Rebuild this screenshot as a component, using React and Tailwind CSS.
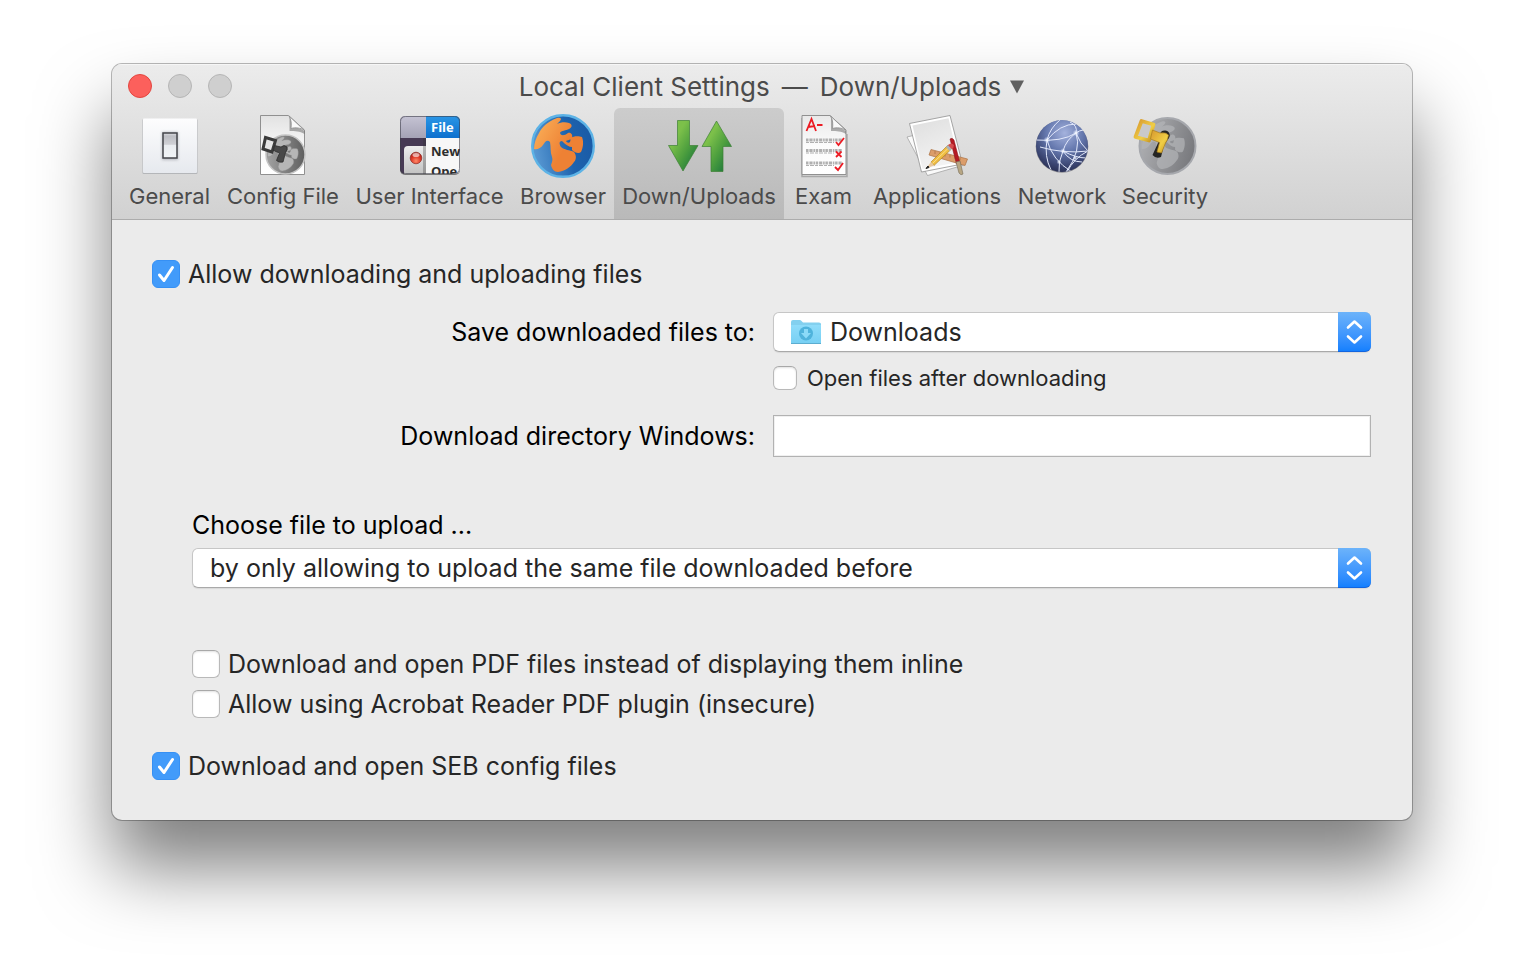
import React from "react";

const TABS = [
  { label: "General", width: "w-[99px]", Icon: GeneralIcon },
  { label: "Config File", width: "w-[128px]", Icon: ConfigIcon },
  { label: "User Interface", width: "w-[165px]", Icon: InterfaceIcon },
  { label: "Browser", width: "w-[102px]", Icon: BrowserIcon },
  { label: "Down/Uploads", width: "w-[170px]", Icon: TransferIcon },
  { label: "Exam", width: "w-[79px]", Icon: ExamIcon },
  { label: "Applications", width: "w-[148px]", Icon: ApplicationsIcon },
  { label: "Network", width: "w-[102px]", Icon: NetworkIcon },
  { label: "Security", width: "w-[104px]", Icon: SecurityIcon },
];

function IconFrame({ children }) {
  return (
    <svg viewBox="0 0 64 64" className="size-16 shrink-0" aria-hidden="true">
      {children}
    </svg>
  );
}

function GeneralIcon() {
  return (
    <IconFrame>
      <defs>
        <linearGradient id="gen-plate" x1="0" y1="0" x2="0" y2="1">
          <stop offset="0" stopColor="#fdfdfe" />
          <stop offset="1" stopColor="#e6e9ee" />
        </linearGradient>
        <linearGradient id="gen-switch" x1="0" y1="0" x2="0" y2="1">
          <stop offset="0" stopColor="#e0e1e5" />
          <stop offset="0.12" stopColor="#bcbdc3" />
          <stop offset="0.45" stopColor="#cfd0d5" />
          <stop offset="0.5" stopColor="#e9ecf0" />
          <stop offset="1" stopColor="#f1f4f7" />
        </linearGradient>
        <filter id="gen-glow" x="-50%" y="-50%" width="200%" height="200%">
          <feGaussianBlur stdDeviation="1.6" />
        </filter>
      </defs>
      <rect x="4.500" y="5" width="55" height="55" rx="1" fill="#b4b6b9" />
      <rect x="5" y="4.500" width="54" height="54.500" rx="1" fill="url(#gen-plate)" />
      <rect x="24" y="18" width="16" height="28" fill="#8b8f96" opacity="0.55" filter="url(#gen-glow)" />
      <rect x="25" y="19" width="14" height="25" fill="url(#gen-switch)" stroke="#43444a" strokeWidth="1.500" />
    </IconFrame>
  );
}

const LAND =
  "M3 35C3 29 5 24 8 19C11 13 16 8 26 4C30 3 31 5 29 7L26 10C30 8 35 8 38 9C41 10 42 13 38 15C35 17 30 16 29 19C30 22 33 22 37 19C40 18 42 21 41 24C40 26 36 26 35 27C36 29 38 29 39 28L40 24C42 22 48 22 51 23C53 28 52 34 50 38C48 40 44 39 41 36L41 33C38 33 35 31 31 27C28 27 28 30 30 33C33 36 39 36 43 38C46 42 45 46 43 48C40 53 34 57 27 58C23 58 21 55 20 51C21 48 22 46 21 43C19 38 20 33 19 28C16 25 14 28 12 31C10 34 6 36 3 35Z";

function Page({ id }) {
  return (
    <>
      <path d="M10 2.500H38L54 17V61.500H10Z" fill={`url(#${id})`} stroke="#909090" strokeWidth="1" />
      <path d="M39 3C42 7 42 11 41 15C46 14 50 15 54 18V21C49 18 45 18 39 18Z" fill="#555" opacity="0.45" />
      <path d="M38.500 3C41 7 41 11 40.500 15.500C45 14 50 15 53.500 17Z" fill="#fafafa" stroke="#8c8c8c" strokeWidth="0.800" />
    </>
  );
}

function ConfigIcon() {
  return (
    <IconFrame>
      <defs>
        <linearGradient id="cfg-page" x1="0" y1="0" x2="0" y2="1">
          <stop offset="0" stopColor="#e2e2e2" />
          <stop offset="0.600" stopColor="#fbfbfb" />
          <stop offset="1" stopColor="#ffffff" />
        </linearGradient>
        <linearGradient id="cfg-globe" x1="0" y1="0" x2="1" y2="0">
          <stop offset="0" stopColor="#a3a3a3" />
          <stop offset="1" stopColor="#5f5f5f" />
        </linearGradient>
      </defs>
      <g transform="translate(-0.500 -1)">
        <Page id="cfg-page" />
      </g>
      <circle cx="34.500" cy="40.500" r="19.500" fill="url(#cfg-globe)" stroke="#c4c4c4" strokeWidth="1.500" />
      <path transform="translate(14.500 20.500) scale(0.63)" d={LAND} fill="#b6b6b6" stroke="#8a8a8a" strokeWidth="0.600" />
      <path d="M14.500 23.500L24.500 26.500L21 38L12 35Z" fill="#e6e6e6" stroke="#3b3b3b" strokeWidth="3" />
      <path d="M23.500 31.500L30 33Q33 30 36 33Q37 36 34.500 38.500L32 48Q28 49 25.500 46.500L28.500 39L22.500 36.500Z" fill="#484848" stroke="#2d2d2d" strokeWidth="0.800" />
    </IconFrame>
  );
}

function InterfaceIcon() {
  return (
    <IconFrame>
      <defs>
        <linearGradient id="ui-blue" x1="0" y1="0" x2="0" y2="1">
          <stop offset="0" stopColor="#2a96e6" />
          <stop offset="1" stopColor="#0d70ce" />
        </linearGradient>
        <linearGradient id="ui-bar" x1="0" y1="0" x2="0" y2="1">
          <stop offset="0" stopColor="#c5c3d4" />
          <stop offset="1" stopColor="#a4a2b5" />
        </linearGradient>
        <linearGradient id="ui-window" x1="0" y1="0" x2="0" y2="1">
          <stop offset="0" stopColor="#ededed" />
          <stop offset="1" stopColor="#bcbcbc" />
        </linearGradient>
        <radialGradient id="ui-red" cx="0.5" cy="0.75" r="0.7">
          <stop offset="0" stopColor="#ff8a68" />
          <stop offset="0.600" stopColor="#dc3525" />
          <stop offset="1" stopColor="#a9251d" />
        </radialGradient>
        <clipPath id="ui-clip"><rect x="2" y="2" width="60" height="58" rx="5" /></clipPath>
      </defs>
      <rect x="2" y="3" width="60" height="58" rx="5" fill="#777" />
      <g clipPath="url(#ui-clip)">
        <rect x="2" y="2" width="60" height="58" fill="#473a54" />
        <rect x="2" y="2" width="27" height="22" fill="url(#ui-bar)" />
        <rect x="6" y="32" width="30" height="32" rx="4" fill="url(#ui-window)" />
        <rect x="25" y="24" width="3" height="36" fill="#333" opacity="0.3" />
        <rect x="28" y="24" width="34" height="36" fill="#f7f7f7" />
        <rect x="28" y="2" width="34" height="22" fill="url(#ui-blue)" />
        <circle cx="18" cy="44" r="5.800" fill="url(#ui-red)" stroke="#8d2a22" strokeWidth="0.700" />
        <ellipse cx="18" cy="41" rx="3.500" ry="2" fill="#fff" opacity="0.6" />
        <g fontFamily="Open Sans, Noto Sans, sans-serif" fontSize="13" fontWeight="700">
          <text x="33" y="18" fill="#fff">File</text>
          <text x="33" y="42" fill="#2d2d2d">New</text>
          <text x="33" y="62" fill="#2d2d2d">Ope</text>
        </g>
      </g>
      <rect x="2.500" y="2.500" width="59" height="57" rx="5" fill="none" stroke="#3d3d4a" strokeOpacity="0.6" />
    </IconFrame>
  );
}

function BrowserIcon() {
  return (
    <IconFrame>
      <defs>
        <linearGradient id="br-sea" x1="0" y1="0.6" x2="1" y2="0.4">
          <stop offset="0" stopColor="#5c9bd4" />
          <stop offset="0.600" stopColor="#1d63ae" />
          <stop offset="1" stopColor="#1a5aa5" />
        </linearGradient>
        <linearGradient id="br-land" x1="0" y1="0" x2="1" y2="0.6">
          <stop offset="0" stopColor="#fbb45c" />
          <stop offset="0.700" stopColor="#ee8134" />
        </linearGradient>
      </defs>
      <circle cx="32" cy="32" r="30.800" fill="url(#br-sea)" stroke="#5db3e6" strokeWidth="2.400" />
      <path d={LAND} fill="url(#br-land)" />
    </IconFrame>
  );
}

function TransferIcon() {
  return (
    <svg viewBox="0 0 68 64" className="h-16 w-[68px] shrink-0" aria-hidden="true">
      <defs>
        <linearGradient id="tr-green" x1="0" y1="0" x2="1" y2="1">
          <stop offset="0.300" stopColor="#7cc04a" />
          <stop offset="0.600" stopColor="#4c9e3e" />
          <stop offset="1" stopColor="#0b6a3c" />
        </linearGradient>
      </defs>
      <g fill="url(#tr-green)" stroke="#3e7f35" strokeWidth="0.700">
        <path d="M12.500 6.500H24.500V31.500H33L18 57L3.500 31.500H12.500Z" />
        <path d="M51.500 7L66.500 32.500H58V57.500H46V32.500H37Z" />
      </g>
    </svg>
  );
}

function ExamIcon() {
  const rows = [26, 36.5, 49];
  return (
    <IconFrame>
      <defs>
        <linearGradient id="ex-page" x1="0" y1="0" x2="0" y2="1">
          <stop offset="0" stopColor="#e9e9e9" />
          <stop offset="0.500" stopColor="#fbfbfb" />
          <stop offset="1" stopColor="#fff" />
        </linearGradient>
      </defs>
      <path d="M10 4V62.500H55V20" fill="none" stroke="#777" strokeWidth="1.500" opacity="0.5" />
      <g transform="translate(0 -1)">
        <Page id="ex-page" />
      </g>
      <g fill="none" stroke="#b0b0b0">
        {rows.map((y) => (
          <g key={y}>
            <path d={`M14 ${y}H50`} strokeWidth="3" strokeDasharray="2.5 0.9 3.2 0.8 1.6 0.7" />
            <path d={`M14 ${y + 2.5}H42`} strokeWidth="1" strokeDasharray="3 1 4 1" />
          </g>
        ))}
      </g>
      <g fill="none" stroke="#ec1c24" strokeWidth="1.800">
        <path d="M14.500 17L19.500 5L24 17M16 13L23 12M25 11H30.500" />
        <path d="M44 28L46.500 31L52 24M44 37.500L49.500 43M49.500 37.500L44 43M43 53L46 56L51 49" />
      </g>
    </IconFrame>
  );
}

function ApplicationsIcon() {
  return (
    <IconFrame>
      <defs>
        <linearGradient id="ap-sheet" x1="0" y1="0" x2="0.4" y2="1">
          <stop offset="0" stopColor="#dedede" />
          <stop offset="1" stopColor="#f3f3f3" />
        </linearGradient>
      </defs>
      <g transform="translate(-1 -1)">
        <path d="M3 24L40 15L60 52L23.500 62.500Z" fill="#fafafa" stroke="#999" strokeWidth="0.700" />
        <path d="M5.500 10.500L46 2.500L58.500 51L17.500 59Z" fill="#fff" stroke="#909090" strokeWidth="0.800" />
        <path d="M8.500 12.500L44.500 5.200L55 49L18.500 56Z" fill="url(#ap-sheet)" />
        <path d="M27 36.500L63.500 46L61 52.500L25 42Z" fill="#db9d6a" stroke="#ac7144" strokeWidth="0.700" />
        <path d="M31 38V41M36 39.500V42M41 41V43.500M46 42V44.500M51 43.500V46M56 45V47.500" stroke="#a86b3e" strokeWidth="0.700" />
        <path d="M46 26Q48 24 50 27L56 50L52.500 51Z" fill="#b51a23" stroke="#851019" strokeWidth="0.500" />
        <path d="M52 49L56 48L59 61Q57 63 55 60Z" fill="#b7a683" stroke="#766b58" strokeWidth="0.600" />
        <path d="M27 49L44 32L47.500 36L30 52.500Z" fill="#efbd42" stroke="#a87a23" strokeWidth="0.600" />
        <path d="M28.500 50.500L45.500 34" stroke="#fbe08b" strokeWidth="1" />
        <path d="M42 34L44 32L47.500 36L45.500 38Z" fill="#a8b2bd" />
        <path d="M44 32Q47 29 50 32Q50 35 47.500 36Z" fill="#d44d50" />
        <path d="M27 49L30 52.500L22 55.500Z" fill="#e8c79d" />
        <path d="M24 53L25 54.500L22 55.500Z" fill="#222" stroke="#222" />
      </g>
    </IconFrame>
  );
}

function NetworkIcon() {
  return (
    <IconFrame>
      <defs>
        <radialGradient id="nw-ball" cx="0.55" cy="0.25" r="0.8">
          <stop offset="0" stopColor="#a4b2dd" />
          <stop offset="0.450" stopColor="#6477ad" />
          <stop offset="0.800" stopColor="#39436f" />
          <stop offset="1" stopColor="#262b4d" />
        </radialGradient>
        <radialGradient id="nw-node">
          <stop offset="0" stopColor="#fff" />
          <stop offset="1" stopColor="#cfdcff" stopOpacity="0" />
        </radialGradient>
        <clipPath id="nw-clip"><circle cx="32" cy="32" r="26" /></clipPath>
      </defs>
      <circle cx="32" cy="32.500" r="26.300" fill="#8b8b91" />
      <circle cx="32" cy="32" r="26" fill="url(#nw-ball)" />
      <g clipPath="url(#nw-clip)" fill="none" stroke="#e3e9fb" strokeWidth="1">
        <path d="M6 26Q32 28 46 19Q53 14 56 18M17 26Q20 14 30 6M17 26Q30 10 46 10M17 26Q14 42 21 56M17 26Q22 46 42 58M10 33Q34 40 58 37M46 19Q36 26 33 37Q28 48 29 58M40 8Q48 12 46 19Q50 30 58 37M46 19Q52 36 36 58M58 37Q44 44 37 58M33 37Q40 48 52 48M33 37Q46 44 56 44" />
      </g>
      <g fill="url(#nw-node)">
        <circle cx="17" cy="26" r="3.500" />
        <circle cx="46" cy="19" r="3.500" />
        <circle cx="33" cy="37" r="3" />
        <circle cx="45" cy="44" r="2.500" />
        <circle cx="29" cy="48" r="2.500" />
      </g>
    </IconFrame>
  );
}

function SecurityIcon() {
  return (
    <IconFrame>
      <defs>
        <linearGradient id="se-globe" x1="0" y1="0.3" x2="1" y2="0.6">
          <stop offset="0" stopColor="#b0b1b4" />
          <stop offset="1" stopColor="#77787c" />
        </linearGradient>
        <linearGradient id="se-gold" x1="0" y1="0" x2="1" y2="1">
          <stop offset="0" stopColor="#d7982e" />
          <stop offset="0.600" stopColor="#f0ce45" />
          <stop offset="1" stopColor="#c18e20" />
        </linearGradient>
      </defs>
      <circle cx="34.500" cy="32" r="28" fill="url(#se-globe)" stroke="#a6a8ad" strokeWidth="2" />
      <path transform="translate(6 4) scale(0.88)" d={LAND} fill="#b4b5b8" opacity="0.7" />
      <path d="M27 23A5 5 0 1 1 36 24L31 31L28 43Q23 45 19.500 41L25 29Z" fill="#252523" />
      <path d="M8.500 7L20.500 10.500L16 26.500L2.500 23Z" fill="#c9c9c9" stroke="url(#se-gold)" strokeWidth="3.800" strokeLinejoin="round" />
      <path d="M19.500 16L27 19Q33 18 35.500 21Q35 26 32.500 29L28.500 39L24 38L26.500 28.500L17.500 25Z" fill="url(#se-gold)" stroke="#a87c20" strokeWidth="0.700" />
    </IconFrame>
  );
}

function CheckBox({ label, checked = false, small = false }) {
  return (
    <label className={small ? "flex items-center gap-[10px] text-[22px] leading-6" : "flex items-center gap-2 text-[25px] leading-7"}>
      <span className={small ? "grid size-6 shrink-0" : "grid size-7 shrink-0"}>
        <input
          type="checkbox"
          defaultChecked={checked}
          className="peer col-start-1 row-start-1 size-full appearance-none rounded-md border border-[#b9b9b9] border-t-[#a8a8a8] bg-white shadow-[inset_0_1px_2px_rgba(0,0,0,0.12)] checked:border-[#3690f4] checked:bg-[#429bfa] checked:shadow-none"
        />
        <svg viewBox="0 0 28 28" className="pointer-events-none invisible col-start-1 row-start-1 size-full peer-checked:visible" aria-hidden="true">
          <path d="M7.500 15L12 20.500L20.500 7.500" fill="none" stroke="#fff" strokeWidth="3" strokeLinecap="round" strokeLinejoin="round" />
        </svg>
      </span>
      {label}
    </label>
  );
}

function PopUp({ id, options, icon }) {
  return (
    <div className="relative flex h-10 items-center rounded-md">
      <select
        id={id}
        className={
          (icon ? "pl-14 " : "pl-[17px] ") +
          "h-10 w-full appearance-none rounded-md border border-[#c6c6c6] border-b-[#a9a9a9] bg-white pr-10 text-[25px] leading-9 text-[#262626] shadow-[0_1px_1px_rgba(0,0,0,0.08)]"
        }
      >
        {options.map((option) => (
          <option key={option}>{option}</option>
        ))}
      </select>
      {icon}
      <span className="pointer-events-none absolute inset-y-0 right-0 w-[33px] rounded-r-md border-b border-[#1265e0] bg-linear-to-b from-[#6cb3fa] to-[#1480fe]">
        <svg viewBox="0 0 33 40" className="h-10 w-[33px]" aria-hidden="true">
          <path d="M10 15.500L16.500 9.500L23 15.500M10 24.500L16.500 30.500L23 24.500" fill="none" stroke="#fff" strokeWidth="2.600" strokeLinecap="round" strokeLinejoin="round" />
        </svg>
      </span>
    </div>
  );
}

function FolderIcon() {
  return (
    <svg viewBox="0 0 32 26" className="pointer-events-none absolute left-[17px] h-[26px] w-8" aria-hidden="true">
      <defs>
        <linearGradient id="folder-front" x1="0" y1="0" x2="0" y2="1">
          <stop offset="0" stopColor="#8fdcfa" />
          <stop offset="1" stopColor="#76cff3" />
        </linearGradient>
      </defs>
      <path d="M1 3Q1 1 3 1H10Q11 1 12 2.500L13 3.500H29Q31 3.500 31 5V24H1Z" fill="#83d0ef" />
      <path d="M1 6H31V24Q31 25 30 25H2Q1 25 1 24Z" fill="url(#folder-front)" />
      <path d="M1 24.500H31" stroke="#5cadd0" strokeWidth="1" />
      <circle cx="16" cy="14.500" r="7" fill="#4fb3dc" />
      <path d="M14 10H18V14H21L16 19.500L11 14H14Z" fill="#8bdaf8" />
    </svg>
  );
}

export default function App() {
  return (
    <div className="min-h-screen bg-white px-28 pt-16 pb-40 font-['Inter','Liberation_Sans',sans-serif] text-[#262626]">
      <main className="overflow-hidden rounded-[10px] bg-[#ebebeb] shadow-[0_0_0_1px_rgba(0,0,0,0.27),0_48px_72px_rgba(0,0,0,0.5)]">
        <header className="border-b border-[#acacac] bg-linear-to-b from-[#ececec] to-[#d1d1d1] text-[#4b4b4b] shadow-[inset_0_1px_0_#f6f6f6]">
          <div className="grid h-11 grid-cols-[108px_1fr_104px] items-center pl-4">
            <div className="flex gap-4">
              <button aria-label="Close" className="size-6 rounded-full border border-[#e2463f] bg-[#fc605c]" />
              <button aria-label="Minimize" className="size-6 rounded-full border border-[#b5b5b5] bg-[#cfcfcf]" />
              <button aria-label="Zoom" className="size-6 rounded-full border border-[#b5b5b5] bg-[#cfcfcf]" />
            </div>
            <h1 className="flex items-center justify-center gap-3 pt-[2px] text-[26px] leading-9">
              <span>Local Client Settings</span>
              <span>—</span>
              <span className="flex items-center gap-2">
                Down/Uploads
                <svg viewBox="0 0 16 14" className="h-[14px] w-4" aria-hidden="true">
                  <path d="M1 0.500H15L8 13.500Z" fill="#606060" />
                </svg>
              </span>
            </h1>
          </div>
          <nav className="flex px-2">
            {TABS.map(({ label, width, Icon }) => (
              <button
                key={label}
                className={
                  width +
                  " flex shrink-0 flex-col items-center gap-[2px] rounded-t-md pt-[6px] pb-[7px] whitespace-nowrap text-[22px] leading-8" +
                  (label === "Down/Uploads" ? " bg-linear-to-b from-[#cccccc] to-[#b9b9b9]" : "")
                }
              >
                <Icon />
                <span>{label}</span>
              </button>
            ))}
          </nav>
        </header>

        <form className="flex flex-col pt-10 pr-[41px] pb-10 pl-10">
          <CheckBox label="Allow downloading and uploading files" checked />

          <div className="mt-6 grid grid-cols-[603px_1fr] items-center gap-x-[18px]">
            <label htmlFor="save-to" className="text-right text-[25px] leading-10 text-black">Save downloaded files to:</label>
            <PopUp id="save-to" options={["Downloads"]} icon={<FolderIcon />} />
            <div className="col-start-2 mt-[14px] mb-[25px]">
              <CheckBox label="Open files after downloading" small />
            </div>
            <label htmlFor="win-dir" className="text-right text-[25px] leading-10 text-black">Download directory Windows:</label>
            <input id="win-dir" type="text" className="h-[42px] w-full border border-[#b2b2b2] bg-white px-2 text-[25px] shadow-[inset_0_0_0_1px_#f0f0f0]" />
          </div>

          <div className="mt-12 flex flex-col pl-10">
            <label htmlFor="upload" className="mb-[3px] text-[25px] leading-10 text-black">Choose file to upload ...</label>
            <PopUp id="upload" options={["by only allowing to upload the same file downloaded before"]} />
            <div className="mt-[62px] flex flex-col gap-3">
              <CheckBox label="Download and open PDF files instead of displaying them inline" />
              <CheckBox label="Allow using Acrobat Reader PDF plugin (insecure)" />
            </div>
          </div>

          <div className="mt-[34px]">
            <CheckBox label="Download and open SEB config files" checked />
          </div>
        </form>
      </main>
    </div>
  );
}
